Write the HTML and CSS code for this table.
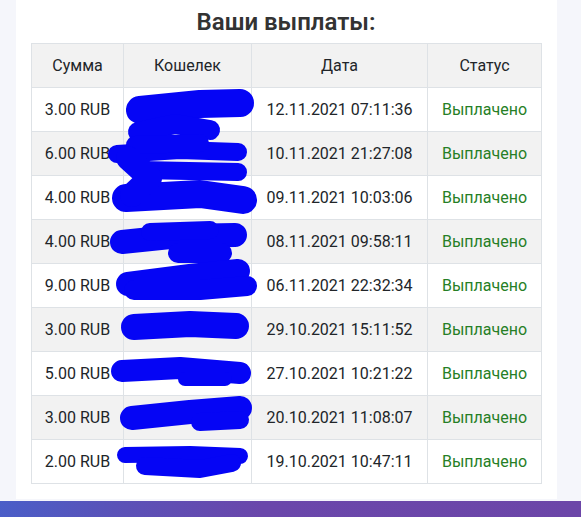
FILE: index.html
```html
<!DOCTYPE html>
<html lang="ru">
<head>
    <meta charset="UTF-8">
    <meta name="viewport" content="width=device-width, initial-scale=1.0">
    <title>Ваши выплаты</title>
    <link rel="stylesheet" href="styles.css">
</head>
<body>
    <div class="panel">
        <h2 class="title">Ваши выплаты:</h2>
        <div class="table-wrap">
            <table class="payouts">
                <colgroup>
                    <col class="c-sum">
                    <col class="c-wallet">
                    <col class="c-date">
                    <col class="c-status">
                </colgroup>
                <thead>
                    <tr><th>Сумма</th><th>Кошелек</th><th>Дата</th><th>Статус</th></tr>
                </thead>
                <tbody>
                    <tr><td>3.00 RUB</td><td></td><td>12.11.2021 07:11:36</td><td class="paid">Выплачено</td></tr>
                    <tr><td>6.00 RUB</td><td></td><td>10.11.2021 21:27:08</td><td class="paid">Выплачено</td></tr>
                    <tr><td>4.00 RUB</td><td></td><td>09.11.2021 10:03:06</td><td class="paid">Выплачено</td></tr>
                    <tr><td>4.00 RUB</td><td></td><td>08.11.2021 09:58:11</td><td class="paid">Выплачено</td></tr>
                    <tr><td>9.00 RUB</td><td></td><td>06.11.2021 22:32:34</td><td class="paid">Выплачено</td></tr>
                    <tr><td>3.00 RUB</td><td></td><td>29.10.2021 15:11:52</td><td class="paid">Выплачено</td></tr>
                    <tr><td>5.00 RUB</td><td></td><td>27.10.2021 10:21:22</td><td class="paid">Выплачено</td></tr>
                    <tr><td>3.00 RUB</td><td></td><td>20.10.2021 11:08:07</td><td class="paid">Выплачено</td></tr>
                    <tr><td>2.00 RUB</td><td></td><td>19.10.2021 10:47:11</td><td class="paid">Выплачено</td></tr>
                </tbody>
            </table>
            <!-- redaction scribbles over the wallet column -->
            <svg class="scribble" width="581" height="517" viewBox="0 0 581 517">
                <g fill="none" stroke="#0505f5" stroke-linecap="round" stroke-linejoin="round">
                    <path d="M140 110 L200 104 L240 103" stroke-width="28"/>
                    <path d="M138 132 L175 124 L210 130" stroke-width="20"/>
                    <path d="M117 154 L180 150 L238 152" stroke-width="18"/>
                    <path d="M135 145 L200 143" stroke-width="18"/>
                    <path d="M140 170 L238 172" stroke-width="18"/>
                    <path d="M126 198 L200 194 L243 200" stroke-width="28"/>
                    <path d="M128 158 L150 178 L132 195" stroke-width="24"/>
                    <path d="M122 242 L180 236 L235 235" stroke-width="24"/>
                    <path d="M150 232 L210 230" stroke-width="18"/>
                    <path d="M178 253 L222 253" stroke-width="20"/>
                    <path d="M128 284 L190 276 L238 271" stroke-width="24"/>
                    <path d="M134 290 L200 290 L247 286" stroke-width="20"/>
                    <path d="M134 327 L190 324 L236 326" stroke-width="26"/>
                    <path d="M122 371 L180 368 L240 373" stroke-width="22"/>
                    <path d="M185 379 L225 379" stroke-width="14"/>
                    <path d="M132 418 L190 412 L240 408" stroke-width="24"/>
                    <path d="M200 422 L240 420" stroke-width="18"/>
                    <path d="M125 455 L190 454 L240 456" stroke-width="16"/>
                    <path d="M145 466 L200 469 L232 463" stroke-width="18"/>
                </g>
            </svg>
        </div>
    </div>
    <div class="footer-bar"></div>
</body>
</html>
```

FILE: styles.css
```css
body {
    margin: 0;
    background-color: #f5f6fb;
    font-family: Roboto, "Liberation Sans", Arial, sans-serif;
    color: #212529;
}
.panel {
    width: 510px;
    margin-left: 16px;
    padding: 0 16px 15px 15px;
    background-color: white;
}
.title {
    margin: 0;
    padding-top: 8px;
    height: 35px;
    font-size: 24px;
    font-weight: 600;
    line-height: 29px;
    text-align: center;
    color: #333;
}
.table-wrap {
    position: relative;
}
.payouts {
    width: 510px;
    border-collapse: collapse;
    table-layout: fixed;
    font-size: 16px;
}
.c-sum { width: 92px; }
.c-wallet { width: 128px; }
.c-date { width: 176px; }
.c-status { width: 114px; }
.payouts th,
.payouts td {
    height: 43px;
    padding: 0;
    border: 1px solid #dee2e6;
    text-align: center;
    vertical-align: middle;
    font-weight: 400;
    white-space: nowrap;
}
.payouts thead tr {
    background-color: #f2f2f2;
}
.payouts tbody tr:nth-child(even) {
    background-color: #f2f2f2;
}
.paid {
    color: #267f26;
}
.scribble {
    position: absolute;
    left: -31px;
    top: -43px;
    pointer-events: none;
}
.footer-bar {
    height: 20px;
    margin-top: 2px;
    background: linear-gradient(100deg, #4a5ec8 0%, #5a52b8 20%, #6a47ab 45%, #6c46a8 100%);
}
```
